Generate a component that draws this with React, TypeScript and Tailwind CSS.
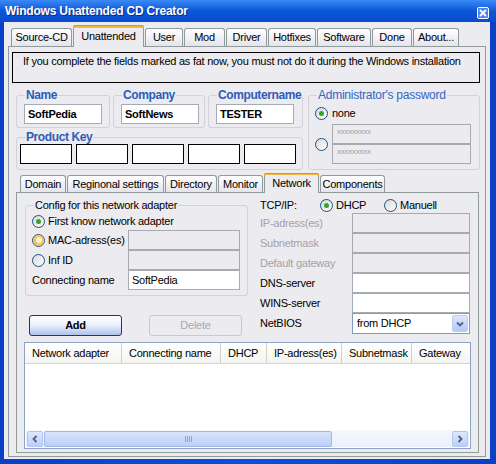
import React from 'react'

type TabDef = { label: string; w: string; active?: boolean }

const outerTabs: TabDef[] = [
  { label: 'Source-CD', w: 'w-[61px]' },
  { label: 'Unattended', w: 'w-[71px]', active: true },
  { label: 'User', w: 'w-[38px]' },
  { label: 'Mod', w: 'w-[41px]' },
  { label: 'Driver', w: 'w-[41px]' },
  { label: 'Hotfixes', w: 'w-[48px]' },
  { label: 'Software', w: 'w-[54px]' },
  { label: 'Done', w: 'w-[40px]' },
  { label: 'About...', w: 'w-[46px]' },
]

const innerTabs: TabDef[] = [
  { label: 'Domain', w: 'w-[46px]' },
  { label: 'Reginonal settings', w: 'w-[97px]' },
  { label: 'Directory', w: 'w-[52px]' },
  { label: 'Monitor', w: 'w-[45px]' },
  { label: 'Network', w: 'w-[55px]', active: true },
  { label: 'Components', w: 'w-[65px]' },
]

const columns = [
  { label: 'Network adapter', w: 'w-[97px]' },
  { label: 'Connecting name', w: 'w-[99px]' },
  { label: 'DHCP', w: 'w-[46px]' },
  { label: 'IP-adress(es)', w: 'w-[75px]' },
  { label: 'Subnetmask', w: 'w-[70px]' },
  { label: 'Gateway', w: 'w-[60px]' },
]

function Tab({ label, w, active, short }: TabDef & { short?: boolean }) {
  if (active) {
    return (
      <div
        className={`${w} ${short ? 'h-[20px]' : 'h-[22px]'} -mb-px relative z-10 flex flex-col border border-b-0 border-[#919b9c] rounded-t-[3px] bg-[#ecebef]`}
      >
        <div className="h-[3px] -mx-px -mt-px rounded-t-[3px] bg-[#f8b73a] border-t border-[#e68b2c]" />
        <div className="flex-1 flex items-center justify-center pb-[2px]">{label}</div>
      </div>
    )
  }
  return (
    <div
      className={`${w} ${short ? 'h-[17px]' : 'h-[18px]'} flex items-center justify-center whitespace-nowrap border border-b-0 border-[#919b9c] rounded-t-[3px] bg-linear-to-b from-white to-[#e4e4ec]`}
    >
      {label}
    </div>
  )
}

function Radio({ checked, hover }: { checked?: boolean; hover?: boolean }) {
  return (
    <span className="w-[13px] h-[13px] shrink-0 rounded-full border border-[#1c5180] bg-linear-to-br from-[#d8d8dc] to-white flex items-center justify-center">
      {hover && (
        <span className="w-[11px] h-[11px] rounded-full bg-[#f7c251] flex items-center justify-center">
          <span className="w-[6px] h-[6px] rounded-full bg-[#fdf1d2]" />
        </span>
      )}
      {checked && <span className="w-[5px] h-[5px] rounded-full bg-[#30a530]" />}
    </span>
  )
}

function Field({ w, children, white, dark }: { w: string; children?: React.ReactNode; white?: boolean; dark?: boolean }) {
  return (
    <div
      className={`${w} h-[20px] flex items-center pl-[3px] ${
        dark ? 'border border-black bg-white' : white ? 'border border-[#a5acb5] bg-white' : 'border border-[#a9a9ae] bg-[#ecebef]'
      }`}
    >
      {children}
    </div>
  )
}

export default function App() {
  return (
    <div className="font-['Liberation_Sans',Arial,sans-serif] tracking-[-0.25px] whitespace-nowrap w-[496px] h-[464px] flex flex-col bg-linear-to-r from-[#0841c6] via-[#0a50da] to-[#0841c6] text-[11px] text-black">
      <div className="h-[22px] shrink-0 flex items-center pl-[5px] pr-[7px] bg-linear-to-b from-[#3a8af6] via-[#0b56d8] to-[#0a4bcd]">
        <span className="text-white font-bold text-[12px] tracking-[-0.2px] [text-shadow:1px_1px_0_#0a2a8a]">
          Windows Unattended CD Creator
        </span>
        <div className="ml-auto mt-[3px] w-[12px] h-[12px] rounded-[2px] border border-white bg-[#4a84f0] flex items-center justify-center">
          <svg width="8" height="8" viewBox="0 0 8 8">
            <path d="M1 1L7 7M7 1L1 7" stroke="white" strokeWidth="1.8" />
          </svg>
        </div>
      </div>

      <div className="flex-1 ml-[4px] mr-[6px] mb-[5px] bg-[#ecebef] flex flex-col">
        {/* outer tabs */}
        <div className="mt-[3px] ml-[7px] h-[21px] flex items-end gap-[1px]">
          {outerTabs.map((t) => (
            <Tab key={t.label} {...t} />
          ))}
        </div>

        <div className="ml-[4px] w-[478px] h-[411px] border border-[#919b9c] flex flex-col">
          <div className="mt-[5px] ml-[3px] w-[468px] h-[31px] border border-black pl-[10px] pt-[1px] leading-[14px]">
            If you complete the fields marked as fat now, you must not do it during the Windows installation
          </div>

          <div className="mt-[5px] ml-[7px] flex">
            <div className="w-[287px] flex flex-col">
              <div className="flex gap-[3px]">
                {[
                  { label: 'Name', value: 'SoftPedia', w: 'w-[94px]' },
                  { label: 'Company', value: 'SoftNews', w: 'w-[92px]' },
                  { label: 'Computername', value: 'TESTER', w: 'w-[95px]' },
                ].map((g) => (
                  <fieldset key={g.label} className={`${g.w} h-[40px] min-w-0 border border-[#d3d1d9] rounded-[3px]`}>
                    <legend className="ml-[8px] px-[1px] leading-[14px] text-[12px] tracking-[-0.4px] font-bold text-[#2d5cb8]">
                      {g.label}
                    </legend>
                    <div className="mt-[2px] pl-[7px]">
                      <Field w="w-[78px]" white>
                        <span className="font-bold">{g.value}</span>
                      </Field>
                    </div>
                  </fieldset>
                ))}
              </div>
              <fieldset className="mt-[3px] h-[39px] min-w-0 border border-[#d3d1d9] rounded-[3px]">
                <legend className="ml-[8px] px-[1px] leading-[13px] text-[12px] tracking-[-0.4px] font-bold text-[#2d5cb8]">
                  Product Key
                </legend>
                <div className="pl-[3px] flex gap-[4px]">
                  {[0, 1, 2, 3, 4].map((i) => (
                    <Field key={i} w="w-[52px]" dark />
                  ))}
                </div>
              </fieldset>
            </div>

            <fieldset className="ml-[5px] w-[172px] h-[82px] min-w-0 border border-[#d3d1d9] rounded-[3px]">
              <legend className="ml-[8px] px-[1px] leading-[14px] text-[12px] text-[#3366c8]">
                Administrator's password
              </legend>
              <div className="pl-[6px] pt-[5px] flex flex-col">
                <div className="h-[13px] flex items-center gap-[4px]">
                  <Radio checked />
                  <span>none</span>
                </div>
                <div className="mt-[4px] flex items-center gap-[4px]">
                  <Radio />
                  <div className="flex flex-col">
                    {[0, 1].map((i) => (
                      <div key={i} className="w-[139px] h-[20px] border border-[#a9a9ae] bg-[#ecebef] pl-[4px] pt-[3px] text-[8px] leading-[8px] text-[#a0a0a6]">
                        xxxxxxxxx
                      </div>
                    ))}
                  </div>
                </div>
              </div>
            </fieldset>
          </div>

          {/* inner tabs */}
          <div className="mt-[3px] ml-[11px] h-[19px] flex items-end gap-[1px]">
            {innerTabs.map((t) => (
              <Tab key={t.label} {...t} short />
            ))}
          </div>

          <div className="ml-[7px] w-[463px] h-[261px] border border-[#919b9c] flex flex-col">
            <div className="mt-[5px] flex">
              <div className="ml-[8px] w-[223px] flex flex-col">
                <fieldset className="h-[98px] min-w-0 border border-[#d3d1d9] rounded-[3px]">
                  <legend className="ml-[8px] px-[1px] leading-[14px]">Config for this network adapter</legend>
                  <div className="pl-[6px] pt-[2px] flex flex-col">
                    <div className="h-[15px] flex items-center gap-[3px]">
                      <Radio checked />
                      <span>First know network adapter</span>
                    </div>
                    <div className="mt-[1px] flex items-center">
                      <div className="w-[96px] flex items-center gap-[3px]">
                        <Radio hover />
                        <span>MAC-adress(es)</span>
                      </div>
                      <Field w="w-[112px]" />
                    </div>
                    <div className="flex items-center">
                      <div className="w-[96px] flex items-center gap-[3px]">
                        <Radio />
                        <span>Inf ID</span>
                      </div>
                      <Field w="w-[112px]" />
                    </div>
                    <div className="flex items-center">
                      <div className="w-[96px]">Connecting name</div>
                      <Field w="w-[112px]" white>
                        SoftPedia
                      </Field>
                    </div>
                  </div>
                </fieldset>
                <div className="mt-[19px] flex">
                  <div className="ml-[4px] w-[93px] h-[21px] rounded-[3px] border border-[#1b3a72] bg-linear-to-b from-white via-[#e8eefb] to-[#aec2ea] flex items-center justify-center font-bold">
                    Add
                  </div>
                  <div className="ml-[27px] w-[93px] h-[21px] rounded-[3px] border border-[#c9c8ce] flex items-center justify-center text-[#aaa9b0]">
                    Delete
                  </div>
                </div>
              </div>

              <div className="ml-[12px] w-[210px] flex flex-col">
                <div className="h-[15px] flex items-center">
                  <span className="w-[60px]">TCP/IP:</span>
                  <div className="w-[64px] flex items-center gap-[3px]">
                    <Radio checked />
                    <span>DHCP</span>
                  </div>
                  <div className="flex items-center gap-[3px]">
                    <Radio />
                    <span>Manuell</span>
                  </div>
                </div>
                {[
                  { label: 'IP-adress(es)', off: true },
                  { label: 'Subnetmask', off: true },
                  { label: 'Default gateway', off: true },
                  { label: 'DNS-server' },
                  { label: 'WINS-server' },
                ].map((r) => (
                  <div key={r.label} className="h-[20px] flex items-center">
                    <span className={`w-[92px] ${r.off ? 'text-[#a3a2a8]' : ''}`}>{r.label}</span>
                    <Field w="w-[118px]" white={!r.off} />
                  </div>
                ))}
                <div className="h-[21px] flex items-center">
                  <span className="w-[92px]">NetBIOS</span>
                  <div className="w-[118px] h-[21px] border border-[#7f9db9] bg-white flex items-center pl-[4px] pr-[1px]">
                    <span className="flex-1">from DHCP</span>
                    <div className="w-[16px] h-[17px] rounded-[2px] border border-[#b9cdf5] bg-linear-to-b from-[#dce6fd] to-[#b4c9f6] flex items-center justify-center">
                      <svg width="8" height="6" viewBox="0 0 8 6">
                        <path d="M1 1.5L4 4.5L7 1.5" fill="none" stroke="#4d6185" strokeWidth="1.8" />
                      </svg>
                    </div>
                  </div>
                </div>
              </div>
            </div>

            {/* list view */}
            <div className="mt-[6px] ml-[7px] w-[447px] h-[107px] border border-[#8ba4c4] bg-white flex flex-col">
              <div className="h-[21px] flex border-b border-[#d6d4cc] bg-linear-to-b from-white to-[#f4f4f0]">
                {columns.map((c, i) => (
                  <div
                    key={c.label}
                    className={`${c.w} shrink-0 flex items-center pl-[7px] ${i < columns.length - 1 ? 'border-r border-[#d0cfc8]' : ''}`}
                  >
                    {c.label}
                  </div>
                ))}
              </div>
              <div className="flex-1" />
              <div className="h-[17px] mb-px mx-px flex items-center bg-linear-to-b from-[#f4f8fe] to-[#e9f0fc]">
                <div className="w-[16px] h-[16px] ml-[1px] rounded-[2px] border border-[#b4c6f0] bg-linear-to-b from-[#dfe8fd] to-[#bccef6] flex items-center justify-center">
                  <svg width="6" height="8" viewBox="0 0 6 8">
                    <path d="M4.5 1L1.5 4L4.5 7" fill="none" stroke="#4d6185" strokeWidth="1.8" />
                  </svg>
                </div>
                <div className="w-[288px] h-[16px] ml-[1px] rounded-[2px] border border-[#9fb8ec] bg-linear-to-b from-[#d8e4fc] to-[#bcd0f8] flex items-center justify-center gap-[1px]">
                  {[0, 1, 2, 3].map((i) => (
                    <span key={i} className="w-[1px] h-[6px] bg-[#8aa4d8]" />
                  ))}
                </div>
                <div className="flex-1" />
                <div className="w-[16px] h-[16px] mr-[1px] rounded-[2px] border border-[#b4c6f0] bg-linear-to-b from-[#dfe8fd] to-[#bccef6] flex items-center justify-center">
                  <svg width="6" height="8" viewBox="0 0 6 8">
                    <path d="M1.5 1L4.5 4L1.5 7" fill="none" stroke="#4d6185" strokeWidth="1.8" />
                  </svg>
                </div>
              </div>
            </div>
          </div>
        </div>
      </div>
    </div>
  )
}
